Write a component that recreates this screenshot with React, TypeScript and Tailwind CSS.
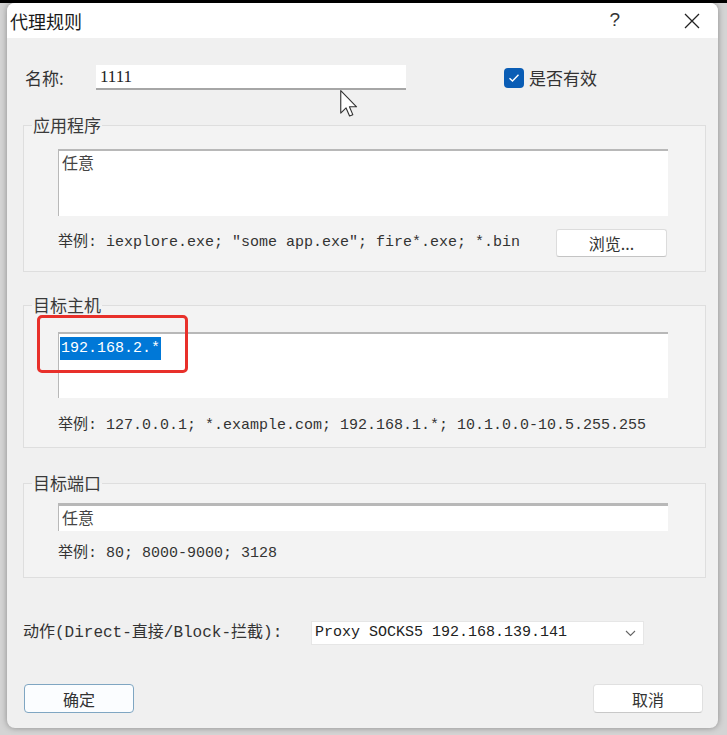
import React from "react";

const cjk = "font-['Noto_Sans_CJK_SC','Liberation_Sans',sans-serif]";
const mono = "font-['Liberation_Mono','Noto_Sans_CJK_SC',monospace]";

function Group({
  title,
  className,
  children,
}: {
  title: string;
  className: string;
  children: React.ReactNode;
}) {
  return (
    <fieldset className={`ml-[16px] w-[683px] border border-[#dedede] bg-[#f3f3f3] ${className}`}>
      <legend className={`ml-[8px] px-[1px] text-[17px] leading-[20px] text-[#3a3a3a] ${cjk}`}>
        {title}
      </legend>
      <div className="pl-[34px]">{children}</div>
    </fieldset>
  );
}

function Example({ text }: { text: string }) {
  return <span className={`text-[15px] leading-[20px] text-[#333] ${mono}`}>{text}</span>;
}

export default function App() {
  return (
    <div className="relative h-[735px] w-[727px] overflow-hidden border-t-[3px] border-black bg-[#d4d4d4]">
      <div className="ml-[7px] flex h-[725px] w-[711px] flex-col overflow-hidden rounded-[8px] bg-[#f0f0f0] shadow-[0_0_6px_rgba(0,0,0,0.35)]">
        {/* title bar */}
        <div className="flex h-[35px] shrink-0 items-center bg-white pl-[3px] pr-[18px]">
          <span className={`text-[18px] leading-[22px] text-[#1a1a1a] ${cjk}`}>代理规则</span>
          <span className="ml-auto mr-[64px] font-['Liberation_Sans',sans-serif] text-[19px] font-light text-[#333]">
            ?
          </span>
          <svg width="16" height="16" viewBox="0 0 16 16">
            <path d="M1 1 L15 15 M15 1 L1 15" stroke="#222" strokeWidth="1.3" fill="none" />
          </svg>
        </div>

        {/* name row */}
        <div className="mt-[27px] flex h-[25px] items-center">
          <span className={`ml-[18px] w-[71px] text-[17px] leading-[20px] text-[#333] ${cjk}`}>名称:</span>
          <div className="flex h-[25px] w-[310px] items-center border-b-2 border-[#a6a6a6] bg-white pl-[4px]">
            <span className="font-['Liberation_Serif',serif] text-[17px] text-[#222]">1111</span>
          </div>
          <div className="ml-[98px] flex h-[20px] w-[20px] items-center justify-center rounded-[4px] bg-[#0a5db5]">
            <svg width="12" height="10" viewBox="0 0 12 10">
              <path d="M1.5 5.2 L4.5 8 L10.5 1.8" stroke="#fff" strokeWidth="1.4" fill="none" />
            </svg>
          </div>
          <span className={`ml-[5px] text-[17px] leading-[20px] text-[#333] ${cjk}`}>是否有效</span>
        </div>

        <Group title="应用程序" className="mt-[25px] pb-[14px] pt-[14px]">
          <div className="h-[67px] w-[610px] border-l border-t-2 border-[#b8b8b8] bg-white pl-[3px]">
            <span className={`text-[16px] leading-[18px] text-[#444] ${cjk}`}>任意</span>
          </div>
          <div className="mt-[13px] flex h-[28px] w-[610px] items-center justify-between">
            <Example text={'举例: iexplore.exe; "some app.exe"; fire*.exe; *.bin'} />
            <div
              className={`mr-[1px] flex h-[28px] w-[111px] items-center justify-center rounded-[3px] border border-[#dcdcdc] border-b-[#c4c4c4] bg-white text-[16px] text-[#333] ${cjk}`}
            >
              浏览...
            </div>
          </div>
        </Group>

        <Group title="目标主机" className="mt-[23px] pb-[11px] pt-[17px]">
          <div className="h-[66px] w-[610px] border-l border-t-2 border-[#b8b8b8] bg-white pl-[1px]">
            <span className={`inline-block h-[23px] bg-[#0078d7] px-[1px] text-[15px] leading-[23px] text-white ${mono}`}>
              192.168.2.*
            </span>
          </div>
          <div className="mt-[18px] flex h-[20px] items-center">
            <Example text="举例: 127.0.0.1; *.example.com; 192.168.1.*; 10.1.0.0-10.5.255.255" />
          </div>
        </Group>

        <Group title="目标端口" className="mt-[25px] pb-[13px] pt-[10px]">
          <div className="h-[28px] w-[610px] border-l border-t-[3px] border-[#b8b8b8] bg-white pl-[3px]">
            <span className={`text-[16px] leading-[20px] text-[#444] ${cjk}`}>任意</span>
          </div>
          <div className="mt-[13px] flex h-[20px] items-center">
            <Example text="举例: 80; 8000-9000; 3128" />
          </div>
        </Group>

        {/* action row */}
        <div className="mt-[43px] flex h-[24px] items-center">
          <span className={`ml-[16px] w-[288px] text-[16px] leading-[20px] text-[#333] ${mono}`}>
            动作(Direct-直接/Block-拦截):
          </span>
          <div className="flex h-[24px] w-[333px] items-center border border-[#e6e6e6] bg-white pl-[3px] pr-[7px]">
            <span className={`text-[15px] leading-[20px] text-[#222] ${mono}`}>Proxy SOCKS5 192.168.139.141</span>
            <svg className="ml-auto" width="11" height="7" viewBox="0 0 11 7">
              <path d="M1 1 L5.5 5.5 L10 1" stroke="#666" strokeWidth="1.1" fill="none" />
            </svg>
          </div>
        </div>

        {/* buttons */}
        <div className="mt-[39px] flex h-[29px] items-center justify-between pl-[17px] pr-[15px]">
          <div
            className={`flex h-[29px] w-[110px] items-center justify-center rounded-[4px] border border-[#7fa6c2] bg-[#fbfdff] text-[16px] text-[#333] ${cjk}`}
          >
            确定
          </div>
          <div
            className={`flex h-[29px] w-[110px] items-center justify-center rounded-[4px] border border-[#e0e0e0] border-b-[#c8c8c8] bg-white text-[16px] text-[#333] ${cjk}`}
          >
            取消
          </div>
        </div>
      </div>

      {/* red annotation box */}
      <div className="absolute left-[37px] top-[312px] h-[58px] w-[151px] rounded-[5px] border-[3px] border-[#e8302a]" />

      {/* mouse pointer */}
      <svg className="absolute left-[340px] top-[87px]" width="19" height="28" viewBox="0 0 13.5 20">
        <path
          d="M0.5 0.5 L0.5 16.5 L4.3 12.8 L6.8 18.6 L9.1 17.6 L6.7 12 L11.8 12 Z"
          fill="#fff"
          stroke="#333"
          strokeWidth="0.8"
          strokeLinejoin="round"
        />
      </svg>
    </div>
  );
}
